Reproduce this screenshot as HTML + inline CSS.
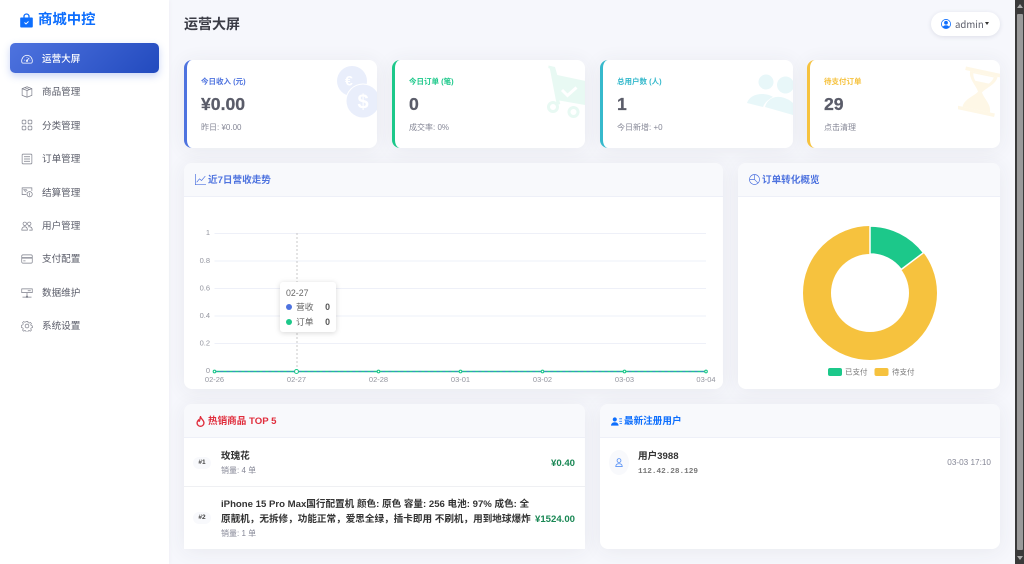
<!DOCTYPE html>
<html lang="zh"><head><meta charset="utf-8"><title>运营大屏</title>
<style>
*{box-sizing:border-box;margin:0;padding:0}
html,body{width:1024px;height:564px;overflow:hidden;background:#f6f7fc}
#root{position:absolute;left:0;top:0;width:1024px;height:564px;overflow:hidden;background:#f6f7fc;font-family:"Liberation Sans","Noto Sans CJK SC",sans-serif;color:#333;filter:blur(.3px)}
.a{position:absolute;white-space:nowrap}
#side{position:absolute;left:0;top:0;width:169px;height:564px;background:#fff;box-shadow:1px 0 4px rgba(0,0,0,.03)}
.logo{left:38px;top:10px;font-size:14.4px;line-height:21px;font-weight:700;color:#0d6efd}
.act{position:absolute;left:10px;top:43px;width:149px;height:30px;border-radius:5px;background:linear-gradient(135deg,#4e73df,#224abe);box-shadow:0 3px 8px rgba(78,115,223,.3)}
.nav{left:42px;font-size:9.6px;line-height:14px;color:#5a5c69}
.ic{position:absolute;left:21px;width:12px;height:12px}
.card{position:absolute;background:#fff;border-radius:8px;box-shadow:0 2px 20px rgba(58,59,69,.07);overflow:hidden}
.stat{top:60px;height:88px;width:193px;border-left:3px solid}
.lab{left:14px;top:16px;font-size:7.5px;line-height:11px;font-weight:700}
.val{left:14px;top:32px;font-size:17.6px;line-height:24px;font-weight:700;color:#5a5c69;-webkit-text-stroke:.25px #5a5c69}
.sub{left:14px;top:62px;font-size:8px;line-height:12px;color:#858796}
.bg{position:absolute}
.hd{position:absolute;left:0;top:0;width:100%;height:34px;background:#f8f9fc;border-bottom:1px solid #eef0f8}
.tt{top:10.500px;font-size:9.6px;line-height:14px;font-weight:700}
.ax{font-size:7.5px;fill:#93959f;font-family:"Liberation Sans",sans-serif}
.tip{position:absolute;left:280px;top:282px;width:56px;height:50px;background:#fff;border-radius:3px;box-shadow:0 1px 6px rgba(0,0,0,.16);font-size:8.8px;color:#666}
.tip div{position:absolute;white-space:nowrap;line-height:12px}
.dot{width:6px;height:6px;border-radius:50%}
</style></head><body><div id="root">

<div id="side">
<svg class="a" style="left:20px;top:13px" width="13" height="15" viewBox="0 0 13 15"><path d="M4 5V3.500a2.500 2.500 0 0 1 5 0V5" fill="none" stroke="#0d6efd" stroke-width="1.300"/><path d="M1 4.500h11a.8.8 0 0 1 .8.8v8.200a1 1 0 0 1-1 1H1.200a1 1 0 0 1-1-1V5.300a.8.8 0 0 1 .8-.8z" fill="#0d6efd"/><path d="M4.500 9.500l1.500 1.500 2.500-2.500" fill="none" stroke="#fff" stroke-width=".9"/></svg>
<div class="a logo">商城中控</div>
<div class="act"></div>

<svg class="ic" style="top:53px" viewBox="0 0 16 16" fill="none" stroke="#fff" stroke-width="1.100"><path d="M2.500 13.500h11a1.500 1.500 0 0 0 1.300-1A7.500 7.500 0 0 0 8 3 7.500 7.500 0 0 0 1.200 12.500a1.500 1.500 0 0 0 1.300 1z"/><path d="M8 10l3-3.500M4 9.500h1M8 5.500v1M11.500 9.500h1"/><circle cx="8" cy="10.300" r="1"/></svg>
<div class="a nav" style="top:52.500px;color:#fff;font-weight:500">运营大屏</div>

<svg class="ic" style="top:86px" viewBox="0 0 16 16" fill="none" stroke="#7a7c88" stroke-width=".9"><path d="M8 1l6.500 2.500v9L8 15l-6.500-2.500v-9zM1.500 3.500L8 6l6.500-2.500M8 6v9M5 2.200l6.500 2.500"/></svg>
<div class="a nav" style="top:86px">商品管理</div>

<svg class="ic" style="top:119px" viewBox="0 0 16 16" fill="none" stroke="#7a7c88" stroke-width=".9"><rect x="1.500" y="1.500" width="5" height="5" rx="1"/><rect x="9.500" y="1.500" width="5" height="5" rx="1"/><rect x="1.500" y="9.500" width="5" height="5" rx="1"/><rect x="9.500" y="9.500" width="5" height="5" rx="1"/></svg>
<div class="a nav" style="top:119.600px">分类管理</div>

<svg class="ic" style="top:153px" viewBox="0 0 16 16" fill="none" stroke="#7a7c88" stroke-width=".9"><rect x="1.500" y="1.500" width="13" height="13" rx="1"/><path d="M4 5h8M4 8h8M4 11h8"/></svg>
<div class="a nav" style="top:153px">订单管理</div>

<svg class="ic" style="top:186px" viewBox="0 0 16 16" fill="none" stroke="#7a7c88" stroke-width=".9"><path d="M7 11.500H1.500v-9h13v4"/><path d="M3 5h2M8 6.500a1.500 1.500 0 0 0-3 0c0 1 2 1 2 2"/><circle cx="11.500" cy="11" r="3.500"/><path d="M11.500 9v4"/></svg>
<div class="a nav" style="top:186.600px">结算管理</div>

<svg class="ic" style="top:220px" viewBox="0 0 16 16" fill="none" stroke="#7a7c88" stroke-width=".9"><circle cx="5" cy="5" r="2.300"/><circle cx="11" cy="5" r="2.300"/><path d="M1 13.500c0-3 1.500-4.500 4-4.500s3.500 1.500 3.500 4.500zM9.500 9.200c.5-.2 1-.2 1.500-.2 2.500 0 4 1.500 4 4.500h-4"/></svg>
<div class="a nav" style="top:220px">用户管理</div>

<svg class="ic" style="top:253px" viewBox="0 0 16 16" fill="none" stroke="#7a7c88" stroke-width=".9"><rect x="1" y="2.500" width="14" height="11" rx="1.500"/><path d="M1 6.500h14" stroke-width="1.600"/><path d="M3 10.500h3"/></svg>
<div class="a nav" style="top:253px">支付配置</div>

<svg class="ic" style="top:287px" viewBox="0 0 16 16" fill="none" stroke="#7a7c88" stroke-width=".9"><path d="M1 2.500h14v5H1zM8 7.500v6M2 13.500h12M9 5h4"/><circle cx="8" cy="13" r="1"/></svg>
<div class="a nav" style="top:286.600px">数据维护</div>

<svg class="ic" style="top:320px" viewBox="0 0 16 16" fill="none" stroke="#7a7c88" stroke-width=".9"><circle cx="8" cy="8" r="2.500"/><path d="M6.800 1h2.400l.4 2 1.600.7 1.700-1.100 1.700 1.700-1.100 1.700.7 1.600 2 .4v2.400l-2 .4-.7 1.600 1.100 1.700-1.700 1.700-1.700-1.100-1.600.7-.4 2H6.800l-.4-2-1.600-.7-1.700 1.100-1.700-1.700 1.100-1.700-.7-1.600-2-.4V6.800l2-.4.7-1.600-1.100-1.700 1.700-1.700 1.700 1.100 1.600-.7z" transform="translate(.8 .8) scale(.9)"/></svg>
<div class="a nav" style="top:320px">系统设置</div>
</div>

<div class="a" style="left:184px;top:14px;font-size:14px;line-height:20px;font-weight:700;color:#3a3b45">运营大屏</div>
<div class="a" style="left:931px;top:12px;width:69px;height:24px;background:#fff;border-radius:12px;box-shadow:0 1px 5px rgba(40,50,90,.12)"></div>
<svg class="a" style="left:941px;top:19px" width="10" height="10" viewBox="0 0 16 16"><circle cx="8" cy="8" r="7.300" fill="none" stroke="#0d6efd" stroke-width="1.300"/><circle cx="8" cy="6" r="3" fill="#0d6efd"/><path d="M2.800 12.800C4 10.500 6 10 8 10s4 .5 5.200 2.800A7 7 0 0 1 8 15a7 7 0 0 1-5.200-2.200z" fill="#0d6efd"/></svg>
<div class="a" style="left:955px;top:17px;font-size:9.6px;line-height:14px;color:#5a5c69;font-family:'Noto Sans CJK SC',sans-serif">admin</div>
<div class="a" style="left:985px;top:22px;width:0;height:0;border-left:2.500px solid transparent;border-right:2.500px solid transparent;border-top:3px solid #333"></div>

<div class="card stat" style="left:184px;border-color:#4e73df">
<svg class="bg" style="left:147px;top:3px" width="46" height="60" viewBox="0 0 46 60"><circle cx="18" cy="18" r="15" fill="#e9eefb"/><circle cx="29" cy="38" r="17.500" fill="#fff"/><circle cx="29" cy="38" r="16.500" fill="#e9eefb"/><text x="11" y="22.500" font-size="14" font-weight="700" fill="#fff" font-family="Liberation Sans">€</text><text x="23.500" y="45.500" font-size="20" font-weight="700" fill="#fff" font-family="Liberation Sans">$</text></svg>
<div class="a lab" style="color:#4e73df">今日收入 (元)</div><div class="a val">¥0.00</div><div class="a sub">昨日: ¥0.00</div></div>

<div class="card stat" style="left:392px;border-color:#1cc88a">
<svg class="bg" style="left:150px;top:4px" width="40" height="56" viewBox="545 64 40 56"><path d="M548.500 65.500l6.500 1.500 2.300 8 28 6v24l-26-4.500 1 3.500-3.500 1-7-36.500-1.500-.5z" fill="#e8f9f3"/><circle cx="553" cy="107" r="4.500" fill="none" stroke="#e8f9f3" stroke-width="3"/><circle cx="573.500" cy="112" r="4.500" fill="none" stroke="#e8f9f3" stroke-width="3"/><path d="M562 90l5.500 5.500 9-8" fill="none" stroke="#fff" stroke-width="3"/></svg>
<div class="a lab" style="color:#1cc88a">今日订单 (笔)</div><div class="a val">0</div><div class="a sub">成交率: 0%</div></div>

<div class="card stat" style="left:600px;border-color:#36b9cc">
<svg class="bg" style="left:144px;top:10px" width="46" height="50" viewBox="747 70 46 50" fill="#e8f7f9"><circle cx="766" cy="82" r="7.500"/><circle cx="785.500" cy="85" r="8.500"/><path d="M747 103c2-6 8-9 15-9 4 0 8 1 11 3-4 2-8 5-10 10z"/><path d="M765 107c2-7 8-11 15-10 5 .5 10 3 13 6v12z"/></svg>
<div class="a lab" style="color:#36b9cc">总用户数 (人)</div><div class="a val">1</div><div class="a sub">今日新增: +0</div></div>

<div class="card stat" style="left:807px;border-color:#f6c23e">
<svg class="bg" style="left:148px;top:6px" width="42" height="54" viewBox="958 66 42 54" fill="#fef7e6"><g transform="rotate(12 980 92)"><rect x="961" y="70" width="38" height="3.500"/><rect x="961" y="110" width="38" height="3.500"/><path d="M966 73.500h28c0 8-9 13-12 18.500 3 5.500 12 10 12 18h-28c0-8 9-12.500 12-18-3-5.500-12-10.500-12-18.500z"/><path d="M969.500 75h21c-.5 3-2 5-3.500 7h-14c-1.500-2-3-4-3.500-7z" fill="#fff"/></g></svg>
<div class="a lab" style="color:#f6c23e">待支付订单</div><div class="a val">29</div><div class="a sub">点击清理</div></div>

<div class="card" style="left:184px;top:163px;width:539px;height:226px"><div class="hd"></div>
<svg class="a" style="left:11px;top:11px" width="11" height="11" viewBox="0 0 16 16" fill="none" stroke="#4e73df" stroke-width="1"><path d="M.5 0v15.500H16"/><path d="M2.500 12l4-5 3 2.500L15 3"/></svg>
<div class="a tt" style="left:24px;color:#4e73df">近7日营收走势</div></div>

<svg class="a" style="left:184px;top:197px" width="539" height="192" viewBox="184 197 539 192">
<g stroke="#eef0f8" stroke-width="1"><path d="M214.500 233.500H706M214.500 261H706M214.500 288.500H706M214.500 316H706M214.500 343.500H706"/></g>
<path d="M297 233V371" stroke="#bbb" stroke-width=".8" stroke-dasharray="2 2"/>
<g class="ax" text-anchor="end"><text x="210" y="235">1</text><text x="210" y="263">0.8</text><text x="210" y="290.500">0.6</text><text x="210" y="318">0.4</text><text x="210" y="345.500">0.2</text><text x="210" y="373">0</text></g>
<g class="ax" text-anchor="middle"><text x="214.500" y="382">02-26</text><text x="296.500" y="382">02-27</text><text x="378.500" y="382">02-28</text><text x="460.500" y="382">03-01</text><text x="542.500" y="382">03-02</text><text x="624.500" y="382">03-03</text><text x="706" y="382">03-04</text></g>
<path d="M214.500 371.500H706" stroke="#1cc88a" stroke-width="1.500"/>
<path d="M214.500 371.500H706" stroke="#4e73df" stroke-width=".8" stroke-dasharray="3 3"/>
<g fill="#fff" stroke="#1cc88a" stroke-width="1.100"><circle cx="214.500" cy="371.500" r="1.300"/><circle cx="296.500" cy="371.500" r="2"/><circle cx="378.500" cy="371.500" r="1.300"/><circle cx="460.500" cy="371.500" r="1.300"/><circle cx="542.500" cy="371.500" r="1.300"/><circle cx="624.500" cy="371.500" r="1.300"/><circle cx="706" cy="371.500" r="1.300"/></g>
</svg>

<div class="tip">
<div style="left:6px;top:5px">02-27</div>
<div class="dot" style="left:6px;top:22px;background:#4e73df"></div><div style="left:16px;top:19px">营收</div><div style="right:6px;top:19px;font-weight:700;color:#555">0</div>
<div class="dot" style="left:6px;top:37px;background:#1cc88a"></div><div style="left:16px;top:34px">订单</div><div style="right:6px;top:34px;font-weight:700;color:#555">0</div>
</div>

<div class="card" style="left:738px;top:163px;width:262px;height:226px"><div class="hd"></div>
<svg class="a" style="left:11px;top:11px" width="11" height="11" viewBox="0 0 16 16" fill="none" stroke="#4e73df" stroke-width="1"><circle cx="8" cy="8" r="7.300"/><path d="M8 1v7l5 5M8 8H1"/></svg>
<div class="a tt" style="left:24px;color:#4e73df">订单转化概览</div></div>

<svg class="a" style="left:738px;top:197px" width="262" height="192" viewBox="738 197 262 192">
<circle cx="870" cy="293" r="53" fill="none" stroke="#f6c23e" stroke-width="28"/>
<path d="M870 226A67 67 0 0 1 923.500 252.700L901.200 269.500A39 39 0 0 0 870 254Z" fill="#1cc88a" stroke="#fff" stroke-width="1.500" stroke-linejoin="round"/>
<rect x="828" y="368" width="14" height="8" rx="2" fill="#1cc88a"/><rect x="874.500" y="368" width="14" height="8" rx="2" fill="#f6c23e"/>
<text x="845" y="374.500" font-size="7.500" fill="#777" font-family="Liberation Sans,Noto Sans CJK SC,sans-serif">已支付</text>
<text x="892" y="374.500" font-size="7.500" fill="#777" font-family="Liberation Sans,Noto Sans CJK SC,sans-serif">待支付</text>
</svg>

<div class="card" style="left:184px;top:404px;width:401px;height:145px;border-radius:8px 8px 0 0"><div class="hd"></div>
<svg class="a" style="left:12px;top:12px" width="9" height="11" viewBox="0 0 12 16" fill="none" stroke="#e02d3c" stroke-width="2"><path d="M6 1c.5 3 5 5 5 9a5 5 0 0 1-10 0c0-2 1-3 2-4 .2 1 .7 1.500 1.300 1.500C5.500 5.500 5 3 6 1z"/></svg>
<div class="a tt" style="left:24px;color:#e02d3c">热销商品 TOP 5</div>
<div class="a" style="left:0;top:82px;width:401px;height:1px;background:#eff0f3"></div>
<div class="a" style="left:9px;top:53px;width:18px;height:12px;border-radius:6px;background:#f8f9fc;font-size:6.500px;line-height:12px;font-weight:700;text-align:center;color:#444">#1</div>
<div class="a" style="left:37px;top:46px;font-size:9.6px;line-height:14px;font-weight:700;color:#333">玫瑰花</div>
<div class="a" style="left:37px;top:61px;font-size:8px;line-height:12px;color:#858796">销量: 4 单</div>
<div class="a" style="right:10px;top:53px;font-size:9.6px;line-height:14px;font-weight:700;color:#198754">¥0.40</div>
<div class="a" style="left:9px;top:108px;width:18px;height:12px;border-radius:6px;background:#f8f9fc;font-size:6.500px;line-height:12px;font-weight:700;text-align:center;color:#444">#2</div>
<div class="a" style="left:37px;top:94px;font-size:9.6px;line-height:14.500px;font-weight:700;color:#333">iPhone 15 Pro Max国行配置机 颜色: 原色 容量: 256 电池: 97% 成色: 全<br>原靓机，无拆修，功能正常，爱思全绿，插卡即用 不刷机，用到地球爆炸</div>
<div class="a" style="left:37px;top:124px;font-size:8px;line-height:12px;color:#858796">销量: 1 单</div>
<div class="a" style="right:10px;top:109px;font-size:9.6px;line-height:14px;font-weight:700;color:#198754">¥1524.00</div>
</div>

<div class="card" style="left:600px;top:404px;width:400px;height:145px"><div class="hd"></div>
<svg class="a" style="left:11px;top:13px" width="11" height="9" viewBox="0 0 16 13" fill="#0d6efd"><circle cx="5.500" cy="3.500" r="3"/><path d="M0 12.500c0-3 2-5 5.500-5s5.500 2 5.500 5z"/><path d="M12 2h4v1.200h-4zM12 5.500h4v1.200h-4zM12.500 9h3.500v1.200h-3.500z"/></svg>
<div class="a tt" style="left:24px;color:#0d6efd">最新注册用户</div>
<div class="a" style="left:9px;top:46px;width:20px;height:25px;border-radius:50%;background:#f8f9fc"></div>
<svg class="a" style="left:15px;top:54px" width="8" height="9" viewBox="0 0 12 14" fill="none" stroke="#5b93f5" stroke-width="1.300"><circle cx="6" cy="4" r="3"/><path d="M1 13.300c0-3 2-4.500 5-4.500s5 1.500 5 4.500z"/></svg>
<div class="a" style="left:38px;top:45.500px;font-size:9.6px;line-height:14px;font-weight:700;color:#333">用户3988</div>
<div class="a" style="left:38px;top:62px;font-size:7.7px;line-height:12px;color:#777;font-family:'Liberation Mono',monospace;font-weight:700">112.42.28.129</div>
<div class="a" style="right:9px;top:53px;font-size:8.2px;line-height:12px;color:#858796">03-03 17:10</div>
</div>

<div class="a" style="left:1015px;top:0;width:9px;height:564px;background:#3a3a3a"></div>
<div class="a" style="left:1016.500px;top:14px;width:6px;height:536px;background:#9a9a9a;border-radius:1px"></div>
<div class="a" style="left:1016.500px;top:4px;width:0;height:0;border-left:3px solid transparent;border-right:3px solid transparent;border-bottom:4px solid #aaa"></div>
<div class="a" style="left:1016.500px;top:556px;width:0;height:0;border-left:3px solid transparent;border-right:3px solid transparent;border-top:4px solid #aaa"></div>
</div></body></html>
